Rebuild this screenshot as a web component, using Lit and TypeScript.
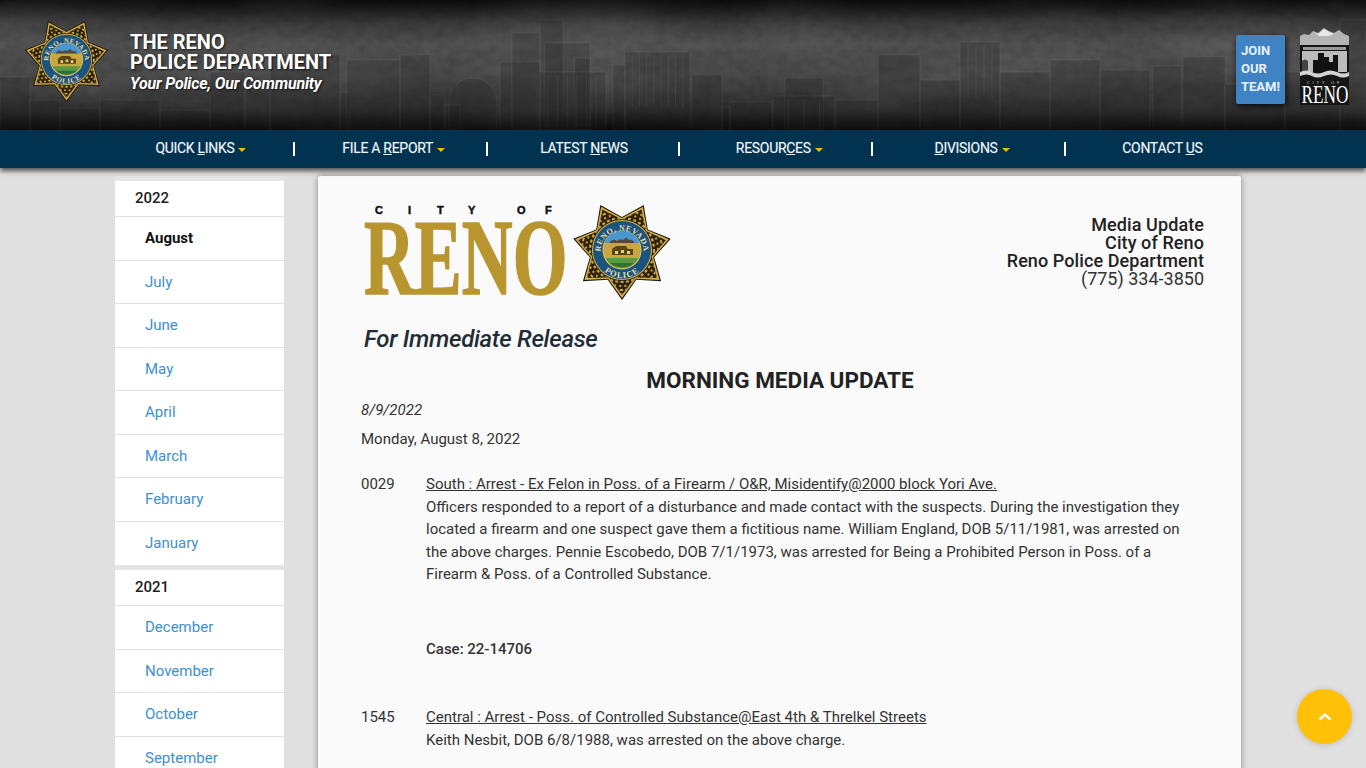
import { LitElement, html, css, svg } from "lit";
import { customElement, property } from "lit/decorators.js";

const starPts = (R: number, r: number) => {
  const p: string[] = [];
  for (let i = 0; i < 14; i++) {
    const a = Math.PI / 2 + (i * Math.PI) / 7;
    const q = i % 2 === 0 ? R : r;
    p.push(`${(q * Math.cos(a)).toFixed(2)},${(q * Math.sin(a)).toFixed(2)}`);
  }
  return p.join(" ");
};

@customElement("police-badge")
class PoliceBadge extends LitElement {
  @property({ type: Number }) size = 84;
  static styles = css`
    :host { display: block; line-height: 0; }
    text { font-family: "Liberation Serif", serif; font-weight: 700; }
  `;
  render() {
    return html`<svg width=${this.size} height=${this.size} viewBox="-52 -52 104 104">
      <defs>
        <path id="top" d="M-21.5 2 A21.5 21.5 0 0 1 21.5 2"/>
        <path id="bot" d="M-27 1 A27 27 0 0 0 27 1"/>
        <clipPath id="inner"><polygon points=${starPts(45, 30.5)}/></clipPath>
      </defs>
      <polygon points=${starPts(50, 33)} fill="#1d1608"/>
      <polygon points=${starPts(48, 32)} fill="#d2ae52"/>
      <polygon points=${starPts(45, 30.5)} fill="#2e2309"/>
      <g clip-path="url(#inner)" fill="none" stroke="#c9a345">
        <circle r="32" stroke-width="2.2" stroke-dasharray="3 2.4"/>
        <circle r="36" stroke-width="2" stroke-dasharray="2 3.2"/>
        <circle r="40" stroke-width="2" stroke-dasharray="3.4 2.2"/>
        <circle r="44" stroke-width="1.6" stroke-dasharray="1.6 2.4"/>
      </g>
      <circle r="30" fill="#d6b04d"/>
      <circle r="29" fill="#1c5480"/>
      <circle r="19.5" fill="#e2c25a"/>
      <circle r="18.6" fill="#c9a63f"/>
      <path d="M-17.5-7 A18.6 18.6 0 0 1 17.5-7 Z" fill="#4a97d0"/>
      <path d="M-13-7 q4-6 8-2 q3-3 6-1 q3-4 6 0 q3-1 6 3 Z" fill="#57483a"/>
      <path d="M-10 5 v-6 l4-3 h10 l2 3 h5 v6 Z" fill="#5a4517"/>
      <path d="M-7 1 h3 v3 h-3 Z M-1 0 h3 v3 h-3 Z M5 1 h3 v3 h-3 Z" fill="#e7cf7a"/>
      <path d="M-16.5 8 H16.5 A18.6 18.6 0 0 1-16.5 8 Z" fill="#5b9a45"/>
      <path d="M-12 13 H12 A18.6 18.6 0 0 1-12 13 Z" fill="#2f7038"/>
      <text font-size="8" fill="#eadca0" letter-spacing="0.5"><textPath href="#top" startOffset="50%" text-anchor="middle">RENO, NEVADA</textPath></text>
      <text font-size="8.5" fill="#eadca0" letter-spacing="1"><textPath href="#bot" startOffset="50%" text-anchor="middle">POLICE</textPath></text>
    </svg>`;
  }
}

type B = [number, number, number, number?];
const buildings: B[] = [
  [0, 77, 30], [30, 100, 30], [60, 108, 40], [100, 100, 60], [160, 110, 50], [210, 72, 35], [245, 90, 25],
  [270, 55, 70, 0], [340, 92, 10], [347, 60, 53], [400, 55, 30], [430, 95, 15], [445, 105, 15],
  [500, 62, 40], [512, 33, 28], [540, 20, 23], [545, 43, 45], [575, 58, 15], [538, 72, 68, 6],
  [613, 65, 12], [625, 52, 65, 8], [692, 75, 30], [722, 107, 8], [730, 102, 42], [785, 78, 38], [773, 96, 62, 3], [835, 100, 43],
  [878, 55, 42], [920, 80, 40], [960, 42, 40, 4], [1000, 72, 50], [1050, 60, 50], [1100, 70, 50], [1153, 66, 28], [1183, 57, 42],
  [1225, 84, 60], [1285, 72, 55], [1340, 20, 26],
];

@customElement("app-root")
class AppRoot extends LitElement {
  static styles = css`
    :host {
      display: block; position: relative; height: 768px; overflow: hidden;
      background: #e0e0e0; font-family: Roboto, "Liberation Sans", sans-serif; color: #333;
    }
    .head {
      position: relative; height: 130px; display: flex; align-items: flex-start; overflow: hidden;
      background:
        linear-gradient(180deg, #0c0c0c 0, #1e1e1e 10px, #3c3c3c 24px, #505051 44px, #4a4a4a 75px, #343434 105px, #1f1f1f 122px, #161616 130px);
    }
    .sky { position: absolute; inset: 0; }
    .badge-h { position: relative; margin: 15px 0 0 22px; }
    .titles { position: relative; margin: 32px 0 0 19px; color: #fff; text-shadow: 1px 1px 2px rgba(0,0,0,.75); }
    .t1 { font-size: 20px; font-weight: 700; line-height: 20px; }
    .t2 { font-size: 16px; font-weight: 700; font-style: italic; line-height: 24px; letter-spacing: -.2px; }
    .spacer { flex: 1; }
    .join {
      position: relative; margin: 35px 15px 0 0; width: 49px; height: 69px; box-sizing: border-box; padding: 7px 0 0 5px;
      background: #3f83c4; border-radius: 2px; color: #e8f1f8; font-size: 13px; font-weight: 700; line-height: 18px;
      box-shadow: 1px 2px 6px rgba(0,0,0,.8);
    }
    .cityseal { position: relative; margin: 28px 17px 0 0; display: block; }
    .cityseal text { font-family: "Liberation Serif", serif; }
    nav {
      position: relative; z-index: 2; height: 38px; background: #01324f; box-shadow: 0 3px 5px rgba(0,0,0,.65);
      display: grid; grid-template-columns: repeat(6, 192.8px); padding-left: 100px;
      align-items: center; color: #f0f5f8; font-size: 14px; letter-spacing: -.3px; text-shadow: 0 0 1px rgba(255,255,255,.35);
    }
    nav div { text-align: center; border-left: 2px solid #fff; height: 14px; line-height: 13px; box-sizing: border-box; white-space: nowrap; padding-left: 2px; }
    nav div:first-child { border-left-color: transparent; }
    nav div.dd { padding-left: 7px; }
    .caret { display: inline-block; width: 0; height: 0; border: 4.5px solid transparent; border-top: 4.5px solid #f0b90b; border-bottom: 0; margin-left: 4px; vertical-align: 1px; }
    .page { display: grid; grid-template-columns: 169px 923px; column-gap: 34px; padding: 8px 0 0 115px; }
    aside { padding-top: 5px; background: #e5e5e5; }
    .group { background: #fff; margin-bottom: 5px; }
    .yr { height: 35px; line-height: 35px; padding-left: 20px; font-size: 15px; font-weight: 500; color: #222; border-bottom: 1px solid #e2e2e2; }
    .mo { height: 43.55px; box-sizing: border-box; line-height: 43px; padding-left: 30px; font-size: 15px; color: #3d8fd0; border-bottom: 1px solid #e2e2e2; }
    .mo:last-child { border-bottom: 0; }
    .mo.on { color: #111; font-weight: 700; }
    main {
      background: #fafafa; border-radius: 2px; box-shadow: 0 0 6px rgba(0,0,0,.4); padding: 27px 37px 0 43px; height: 640px; box-sizing: border-box;
      font-size: 15px; line-height: 22.5px;
    }
    .top { display: flex; justify-content: space-between; align-items: flex-start; }
    .logo { display: flex; align-items: flex-start; height: 97px; }
    .logo svg text { font-family: "Liberation Serif", serif; }
    .logo police-badge { margin: -5px 0 0 3px; }
    .contact { text-align: right; font-size: 18px; line-height: 18px; font-weight: 500; color: #222; padding-top: 13px; letter-spacing: .09px; }
    .contact span { font-weight: 400; color: #333; letter-spacing: 0; }
    .fir { font-size: 24px; line-height: 30px; font-style: italic; font-weight: 500; color: #222c36; margin: 24px 0 0 3px; letter-spacing: -.3px; }
    h1 { font-size: 22.5px; line-height: 26px; font-weight: 700; color: #222; text-align: center; margin: 13px 5px 0 0; }
    .date { font-style: italic; margin-top: 6px; }
    .day { margin-top: 6px; }
    .row { display: grid; grid-template-columns: 65px 770px; }
    .row.a { margin-top: 23px; }
    .row.b { margin-top: 46px; }
    .row u { display: block; }
    .case { font-weight: 500; margin-top: 52px; color: #333; }
    .up {
      position: absolute; left: 1297px; top: 689px; width: 55px; height: 55px; border-radius: 50%;
      background: #ffc107; display: flex; align-items: center; justify-content: center; box-shadow: 0 1px 6px rgba(0,0,0,.15);
    }
  `;

  renderSky() {
    return html`<svg class="sky" width="1366" height="130" viewBox="0 0 1366 130">
      <defs>
        <filter id="n" x="0" y="0" width="100%" height="100%">
          <feTurbulence type="fractalNoise" baseFrequency="0.09 0.12" numOctaves="5" seed="11"/>
          <feColorMatrix values="0 0 0 0 0  0 0 0 0 0  0 0 0 0 0  0.9 0 0 0 -0.3"/>
        </filter>
        <filter id="b" x="0" y="0" width="100%" height="100%">
          <feTurbulence type="fractalNoise" baseFrequency="0.006 0.02" numOctaves="3" seed="4"/>
          <feColorMatrix values="0 0 0 0 1  0 0 0 0 1  0 0 0 0 1  1.2 0 0 0 -0.45"/>
        </filter>
        <linearGradient id="fade" x1="0" x2="0" y1="0" y2="1">
          <stop offset="0" stop-color="#000" stop-opacity="0"/>
          <stop offset=".7" stop-color="#000" stop-opacity=".05"/>
          <stop offset="1" stop-color="#000" stop-opacity=".45"/>
        </linearGradient>
      </defs>
      <rect width="1366" height="130" filter="url(#n)" opacity=".25"/>
      <rect width="1366" height="130" filter="url(#b)" opacity=".12"/>
      <g fill="#262626" fill-opacity=".26" stroke="#fff" stroke-opacity=".055">
        ${buildings.map(([x, y, w, n]) => svg`<rect x=${x} y=${y} width=${w} height=${130 - y}/>
          ${n ? Array.from({ length: n }, (_, i) => svg`<line x1=${x + ((i + 1) * w) / (n + 1)} x2=${x + ((i + 1) * w) / (n + 1)} y1=${y + 3} y2=${y + 55}/>`) : ""}`)}
        <path d="M449 130 V103 A24 25 0 0 1 497 103 V130 Z"/>
      </g>
      <rect y="70" width="1366" height="60" fill="url(#fade)"/>
    </svg>`;
  }

  renderCitySeal() {
    return html`<svg class="cityseal" width="49" height="77" viewBox="0 0 49 77">
      <path d="M0 77 V8 L4 6 L9 7 L13 3 L18 5 L24 0 L29 3 L34 5 L39 2 L44 6 L49 8 V77 Z" fill="#b4b4b4"/>
      <path d="M14 4 l4 2 l6-5 l5 3 l5 2 l-6 2 h-9 Z" fill="#e8e8e8"/>
      <rect y="17" width="49" height="60" fill="#151515"/>
      <rect x="3" y="19" width="43" height="3" fill="#9a9a9a"/>
      <rect x="2" y="23" width="45" height="21" fill="#bcbcbc"/>
      <path d="M13 44 V32 H18 V25 H24 V29 H29 V34 H33 V27 H38 V44 Z" fill="#111"/>
      <path d="M2 44 V33 q3-3 6 0 V44 Z" fill="#444"/>
      <path d="M0 44 q6-3 12 0 t12 0 t13 0 t12 0 V48 q-6 3-12 0 t-13 0 t-12 0 t-12 0 Z" fill="#d4d4d4"/>
      <text x="24.5" y="56" text-anchor="middle" font-size="4" fill="#cfcfcf" letter-spacing="2.8" style="font-family:'Liberation Sans',sans-serif">CITY OF</text>
      <text transform="translate(1.5 75) scale(.69 1)" font-size="25" fill="#fff">RENO</text>
    </svg>`;
  }

  renderMonths(items: string[], active = "") {
    return items.map((m) => html`<div class="mo ${m === active ? "on" : ""}">${m}</div>`);
  }

  render() {
    return html`
      <header class="head">
        ${this.renderSky()}
        <police-badge class="badge-h" size="89"></police-badge>
        <div class="titles">
          <div class="t1">THE RENO<br />POLICE DEPARTMENT</div>
          <div class="t2">Your Police, Our Community</div>
        </div>
        <div class="spacer"></div>
        <div class="join">JOIN<br />OUR<br />TEAM!</div>
        ${this.renderCitySeal()}
      </header>
      <nav>
        <div class="dd">QUICK <u>L</u>INKS<i class="caret"></i></div>
        <div class="dd">FILE A <u>R</u>EPORT<i class="caret"></i></div>
        <div>LATEST <u>N</u>EWS</div>
        <div class="dd">RESOUR<u>C</u>ES<i class="caret"></i></div>
        <div class="dd"><u>D</u>IVISIONS<i class="caret"></i></div>
        <div>CONTACT <u>U</u>S</div>
      </nav>
      <div class="page">
        <aside>
          <div class="group">
            <div class="yr">2022</div>
            ${this.renderMonths(["August", "July", "June", "May", "April", "March", "February", "January"], "August")}
          </div>
          <div class="group">
            <div class="yr">2021</div>
            ${this.renderMonths(["December", "November", "October", "September", "August"])}
          </div>
        </aside>
        <main>
          <div class="top">
            <div class="logo">
              <svg width="206" height="97" viewBox="0 0 206 97">
                <text y="11" x="14 47 76 107 135 156 184" font-size="11" font-weight="700" fill="#111" stroke="#111" stroke-width=".5" style="font-family:'Liberation Sans',sans-serif">CITY OF</text>
                <text transform="translate(3 91) scale(.652 1)" font-size="108" font-weight="700" fill="#b8952f" stroke="#b8952f" stroke-width="1.6">RENO</text>
              </svg>
              <police-badge size="104"></police-badge>
            </div>
            <div class="contact">Media Update<br />City of Reno<br />Reno Police Department<br /><span>(775) 334-3850</span></div>
          </div>
          <div class="fir">For Immediate Release</div>
          <h1>MORNING MEDIA UPDATE</h1>
          <div class="date">8/9/2022</div>
          <div class="day">Monday, August 8, 2022</div>
          <div class="row a">
            <div>0029</div>
            <div>
              <u>South : Arrest - Ex Felon in Poss. of a Firearm / O&amp;R, Misidentify@2000 block Yori Ave.</u>
              Officers responded to a report of a disturbance and made contact with the suspects. During the investigation they located a firearm and one suspect gave them a fictitious name. William England, DOB 5/11/1981, was arrested on the above charges. Pennie Escobedo, DOB 7/1/1973, was arrested for Being a Prohibited Person in Poss. of a Firearm &amp; Poss. of a Controlled Substance.
              <div class="case">Case: 22-14706</div>
            </div>
          </div>
          <div class="row b">
            <div>1545</div>
            <div>
              <u>Central : Arrest - Poss. of Controlled Substance@East 4th &amp; Threlkel Streets</u>
              Keith Nesbit, DOB 6/8/1988, was arrested on the above charge.
            </div>
          </div>
        </main>
      </div>
      <div class="up" aria-label="Back to top">
        <svg width="14" height="9" viewBox="0 0 14 9"><path d="M1.5 7.5 L7 2.5 L12.5 7.5" fill="none" stroke="#fff" stroke-width="2.4"/></svg>
      </div>
    `;
  }
}
